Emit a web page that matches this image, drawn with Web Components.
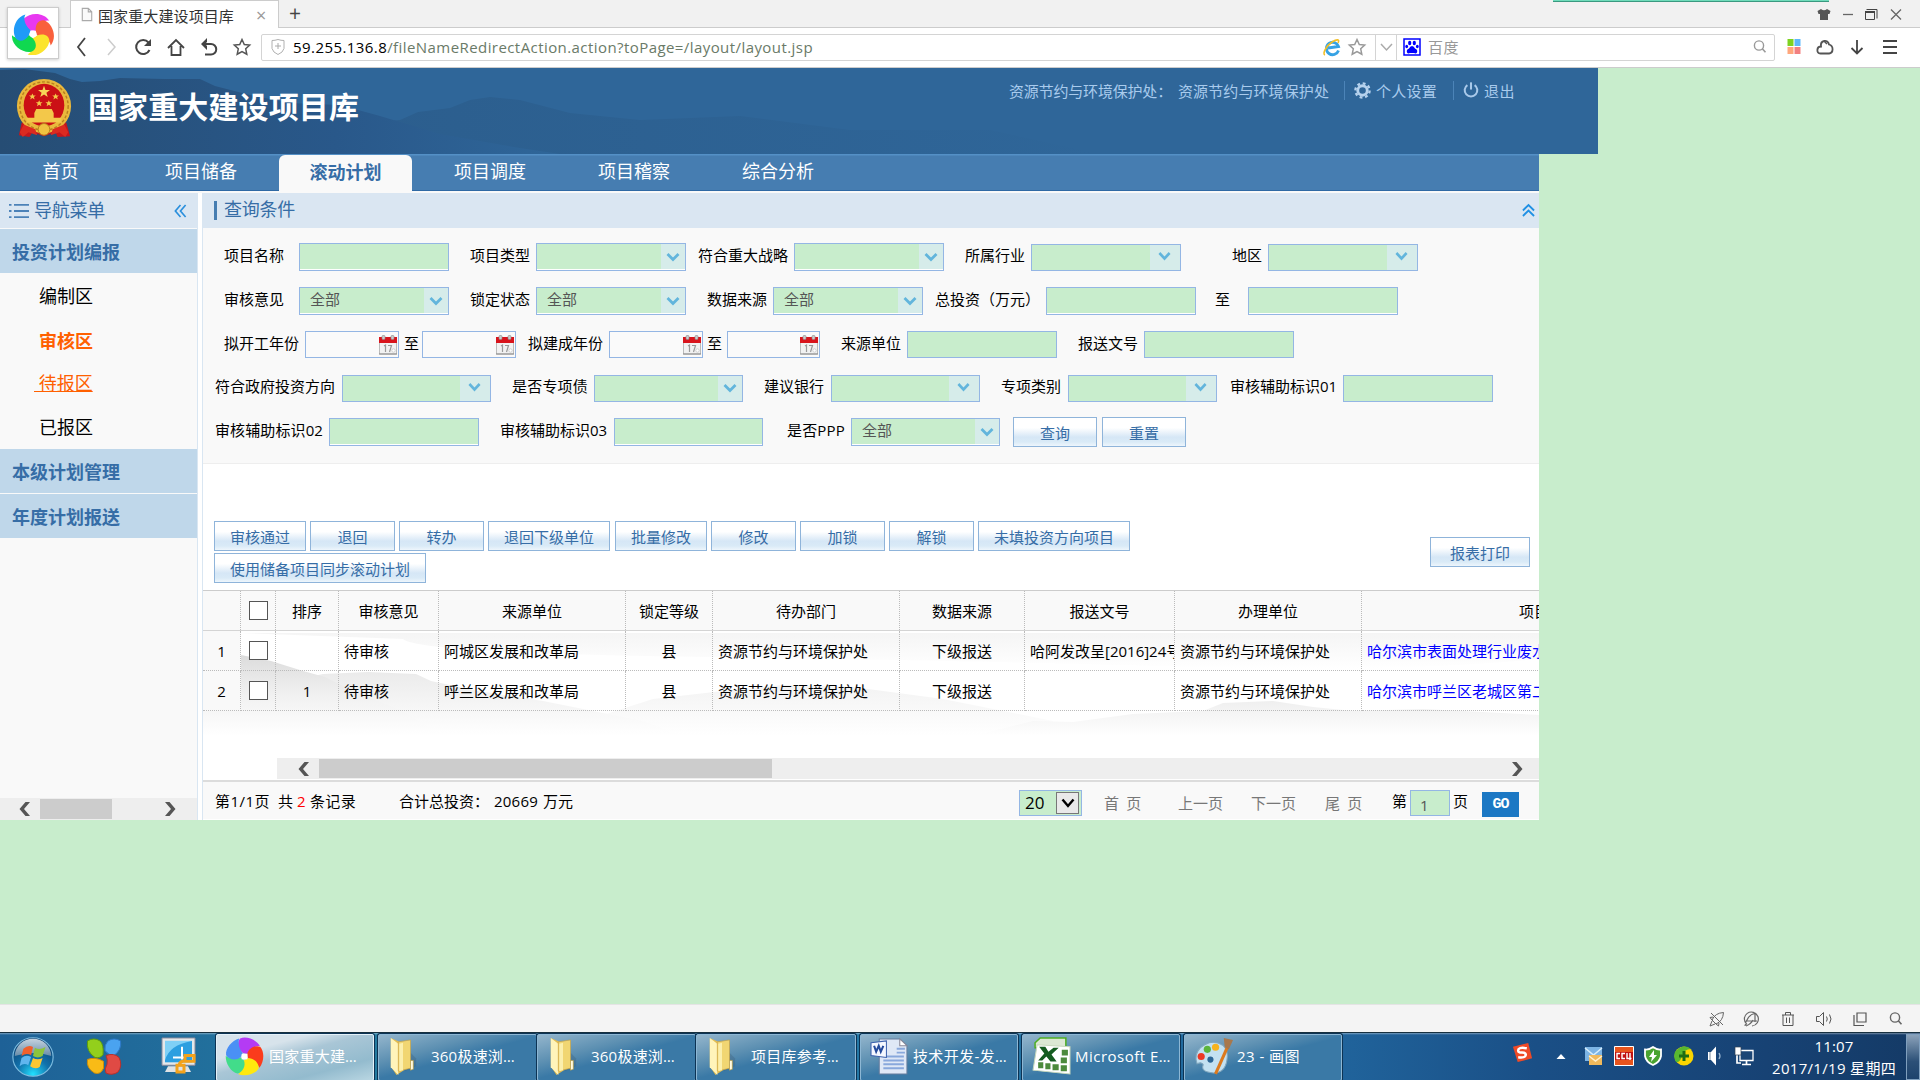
<!DOCTYPE html>
<html lang="zh-CN">
<head>
<meta charset="utf-8">
<title>国家重大建设项目库</title>
<style>
html,body{margin:0;padding:0}
body{width:1920px;height:1080px;overflow:hidden;background:#c8edcc;font:15px/20px "Open Sans","Noto Sans CJK SC",sans-serif;color:#000}
</style>
</head>
<body>
<app-screen></app-screen>
<script>
const ICONS={
pin:['-62 -62 124 124',[['#e838f0',0],['#f9603c',72],['#fbe42c',144],['#10d850',216],['#1f9af8',288]].map(a=>`<path fill="${a[0]}" transform="rotate(${a[1]-6})" d="M-5 -11C-26 -18 -33 -36 -22 -48C-2 -65 38 -62 52 -34C36 -39 19 -26 9 -9Z"/>`).join('')+'<circle r="10" fill="#fff"/>'],
pin6:['-62 -62 124 124',[['#b43bf4',0],['#fb3c1c',72],['#ffe80e',144],['#42dc8a',216],['#4a90f5',288]].map(a=>`<path fill="${a[0]}" transform="rotate(${a[1]})" d="M-5 -11C-22 -20 -25 -45 -14 -57C5 -66 36 -54 49 -34C30 -32 17 -22 9 -9Z"/>`).join('')+'<rect x="-9" y="-8" width="18" height="17" fill="#fff"/>'],
page:['0 0 14 17','<path d="M1.5 1.5h7l4 4v10h-11zM8.500 1.500v4h4" fill="#fafafa" stroke="#aaa" stroke-width="1.300"/>'],
back:['0 0 20 20','<path d="M13 1 6 10l7 9" fill="none" stroke="#444" stroke-width="1.800"/>'],
fwd:['0 0 20 20','<path d="M7 2l7 8-7 8" fill="none" stroke="#ccc" stroke-width="1.500"/>'],
reload:['0 0 20 20','<path d="M16.500 13A7 7 0 1 1 15.500 5.500" fill="none" stroke="#444" stroke-width="2"/><path d="M18 2v7h-7z" fill="#444"/>'],
home:['0 0 20 20','<path d="M2 11 10 3l8 8M5.500 9v9h9V9" fill="none" stroke="#444" stroke-width="1.800"/>'],
undo:['0 0 20 20','<path d="M3 7h9a5.200 5.200 0 0 1 0 10.500H6" fill="none" stroke="#444" stroke-width="2"/><path d="M8 1 2 7l6 6V9L6 7l2-2z" fill="#444"/>'],
star:['0 0 20 20','<path d="M10 2.500l2.300 5 5.400.600-4 3.700 1.100 5.400L10 14.500l-4.800 2.700 1.100-5.400-4-3.700 5.400-.600z" fill="none" stroke="currentColor" stroke-width="1.500"/>'],
shield:['0 0 20 20','<path d="M4 3.500q3 0 6-1 3 1 6 1v8q-1 4-6 6-5-2-6-6z" fill="none" stroke="#b0b0b0"/><path d="M10 6v6M7 9h6" stroke="#aaa"/>'],
ie:['0 0 20 20','<path d="M16.500 13.500A6.200 6.200 0 1 1 16.500 9.500L6 11" fill="none" stroke="#36a2e4" stroke-width="2.800"/><path d="M3 18C0 17 4 9 10 5 15 2 18 2 16 6" fill="none" stroke="#f3bf26" stroke-width="1.600"/>'],
down1:['0 0 20 20','<path d="M5 7l5.500 6L16 7" fill="none" stroke="#aaa" stroke-width="1.500"/>'],
baidu:['0 0 20 20','<path d="M2 2h16v16H2z" fill="#fff" stroke="#00f" stroke-width="1.500"/><g fill="#00f"><ellipse cx="7.700" cy="6" rx="1.600" ry="2.200"/><ellipse cx="12.300" cy="6" rx="1.600" ry="2.200"/><ellipse cx="4.700" cy="9.500" rx="1.400" ry="1.800"/><ellipse cx="15.300" cy="9.500" rx="1.400" ry="1.800"/><path d="M10 9q2 0 3 2.500 3 1 2 4-1 1.500-3 .500H8q-2 1-3-.500-1-3 2-4Q8 9 10 9z"/></g>'],
search:['0 0 20 20','<circle cx="9" cy="8.500" r="4.600" fill="none" stroke="currentColor" stroke-width="1.400"/><path d="M12.300 11.800l3.200 3.500" stroke="currentColor" stroke-width="1.600"/>'],
grid:['0 0 20 20','<path fill="#7ed321" d="M3.500 2h6v7h-6z"/><path fill="#5eb8fb" d="M10.500 2h6v7h-6z"/><path fill="#ffa77c" d="M3.500 10h6v7h-6z"/><path fill="#f28080" d="M10.500 10h6v7h-6z"/>'],
cloud:['0 0 20 20','<path d="M5.500 16.500C1 16 1.500 9.500 6 9.500 5 3 13 2 14 7.500c5 1.500 4.500 8.500 0 9z" fill="none" stroke="#555" stroke-width="1.800"/><path d="M9 4l3 3" stroke="#555" stroke-width="1.500"/>'],
arrowd:['0 0 20 20','<path d="M10 3v13M4.500 11l5.500 5.500L15.500 11" fill="none" stroke="#444" stroke-width="1.800"/>'],
menu:['0 0 20 20','<path d="M3 4h14M3 10h14M3 16h14" stroke="#444" stroke-width="2.200"/>'],
shirt:['0 0 20 20','<path d="M7 5q3 2.500 6 0l3.500 2-1 3h-1.500V16H6v-6H4.500l-1-3z" fill="#555"/>'],
min:['0 0 20 20','<path d="M5 10.500h10" stroke="#666" stroke-width="1.300"/>'],
restore:['0 0 20 20','<path d="M4.500 8.500h9v7h-9z" fill="none" stroke="#444"/><path d="M4 8h10" stroke="#444" stroke-width="2"/><path d="M5.500 5.500h10.500v9" fill="none" stroke="#444"/>'],
close:['0 0 20 20','<path d="M5 5.500l10 10M15 5.500l-10 10" stroke="#666" stroke-width="1.300"/>'],
gear:['0 0 20 20','<g stroke="#b6d2ee" fill="none"><circle cx="10" cy="10" r="5" stroke-width="3"/><circle cx="10" cy="10" r="7.500" stroke-width="2.400" stroke-dasharray="3 2.890"/></g>'],
power:['0 0 20 20','<path d="M6 4.500a7 7 0 1 0 8 0" fill="none" stroke="#a9c9ea" stroke-width="2.300"/><path d="M10 1.500v8" stroke="#a9c9ea" stroke-width="2.300"/>'],
list:['0 0 20 18','<path d="M0 2h2.500M0 9h2.500M0 16h2.500M5 2h15M5 9h15M5 16h15" stroke="#4c82b8" stroke-width="2"/>'],
dleft:['0 0 14 14','<path d="M7 1 1.500 7 7 13M12.500 1 7 7l5.500 6" fill="none" stroke="#2a8fdc" stroke-width="1.800"/>'],
dup:['0 0 14 14','<path d="M1 7.500 7 2l6 5.500M1 13l6-5.500 6 5.500" fill="none" stroke="#2090e4" stroke-width="2"/>'],
chev:['0 0 14 14','<path d="M1.500 4 7 9.500 12.500 4" fill="none" stroke="#62b5dc" stroke-width="2.800"/>'],
cal:['0 0 18 20','<path d="M.500 7h17v12H.500z" fill="#f2f2f2" stroke="#bbb"/><path d="M0 2h18v6H0z" fill="#d8141c"/><path d="M0 19h18" stroke="#888"/><g fill="#ccc" stroke="#888" stroke-width=".600"><rect x="3" y=".500" width="3" height="4" rx="1"/><rect x="12" y=".500" width="3" height="4" rx="1"/></g><path d="M5 11l1.500-1v7M9 10.500h3.500L10.500 17" fill="none" stroke="#999" stroke-width="1.200"/><circle cx="14.500" cy="15.500" r="1.700" fill="#fff" stroke="#bbb" stroke-width=".600"/>'],
sl:['0 0 14 16','<path d="M7.500 1h4.500L6 8l6 7H7.500L1.500 8z" fill="#555"/>'],
sr:['0 0 14 16','<path d="M6.500 1H2l6 7-6 7h4.500l6-7z" fill="#555"/>'],
rocket:['0 0 20 20','<path d="M5 11Q8 4 16.500 3.500 16 12 9 15zM6 8l-3 .500L5 11M12 14l-.500 3L9 15M5 12l-2 5 5-2M8 8l4 4M4 4l12 12" fill="none" stroke="#666"/>'],
speed:['0 0 20 20','<path d="M5 15.500A7 7 0 1 1 10 17M3 17C4 10 8 5 13 4.500V13M5 12h10M4 17q5-2 7-6" fill="none" stroke="#666" stroke-width="1.200"/>'],
trash:['0 0 20 20','<path d="M4 6h12M5 6v10.500h10V6M7.500 6V3.500h5V6M8.500 8.500v5.500M11.500 8.500v5.500" fill="none" stroke="#555"/>'],
vol:['0 0 20 20','<path d="M2.500 7.500h3l4-4v13l-4-4h-3zM12.500 7.500q1.500 2.500 0 5M15.500 5.500q3 4.500 0 9" fill="none" stroke="#555"/>'],
wins:['0 0 20 20','<path d="M7 4h9v9H7zM4 6v10.500h10" fill="none" stroke="#555" stroke-width="1.200"/>'],
orb:['0 0 48 46','<defs><radialGradient id="o" cx=".5" cy=".95" r=".9"><stop offset="0" stop-color="#22e0ff"/><stop offset=".45" stop-color="#1172ac"/><stop offset="1" stop-color="#0d3d6d"/></radialGradient><linearGradient id="g" x2="0" y2="1"><stop stop-color="#e6eef4"/><stop offset="1" stop-color="#7894ac"/></linearGradient></defs><circle cx="24" cy="23" r="21" fill="url(#o)" stroke="#7dbde0" stroke-width="1.200"/><path d="M5 22a19 19 0 0 1 38 0q-18-7-38 0z" fill="url(#g)" opacity=".85"/><path fill="#f0602c" d="M14 14q5-5 10-2l-2 9q-5-3-10 1z"/><path fill="#8cc43c" d="M26 13q5 3 11-1l-3 10q-5 3-10 0z"/><path fill="#5fb5ee" d="M12 24q5-4 10-1l-3 9q-4-3-9 1z"/><path fill="#fbc734" d="M24 24q5 3 10 0l-3 10q-5 3-10-1z"/>'],
four:['0 0 36 38','<path fill="#93cf1c" stroke="#5c9a0c" d="M1.500 3Q8-1 14 3q4 4 3 14-2 4-8 3Q0 14 1.500 3z"/><path fill="#4aa3f0" stroke="#2c78c8" d="M34.500 3Q28-1 22 3q-4 4-3 10 4 5 9 5Q36 12 34.500 3z"/><path fill="#f9bb16" stroke="#cf8c08" d="M1.500 22q8-3 16 2v7q-3 7-9 5Q0 31 1.500 22z"/><path fill="#e04a44" stroke="#b8302c" d="M20 18q8-3 13 2 4 8-1 15-6 4-12 1-2-4 1-9 1-5-1-9z"/>'],
snip:['0 0 36 38','<path fill="#e5e8ea" stroke="#889" d="M1 1h33v28H1z"/><path fill="#2d9fe0" d="M4 4h27v22H4z"/><path fill="#7fd0f6" d="M4 4h27Q8 8 4 24z"/><path fill="#dfe2e4" d="M7 30h20l3 6H4z"/><path d="M21 10v13M12 21h12" stroke="#fff" stroke-width="2" fill="none"/><g fill="none" stroke="#f3a21b" stroke-width="3"><path d="M24 19h9v6h-9zM16 29h7v7h-7zM18 29q1-5 6-4"/></g>'],
folder:['0 0 32 40','<path fill="#3a5a70" opacity=".3" d="M18 35l12-5v-8l-8-8z"/><path fill="#e3bd52" d="M3 1l14 6v27L9 39 3 30z"/><path fill="#fff4ba" d="M3 1l8 6v32L3 31z"/><path fill="#f1d672" stroke="#c9a343" stroke-width=".700" d="M11 5l13-2v29L11 35z"/><path fill="#fbefad" d="M12 7l4-1v28l-4 1z"/><path fill="#fffbe2" stroke="#b99a3e" stroke-width=".700" d="M24 24h3v9l-3 1z"/>'],
word:['0 0 38 40','<path fill="#dfe8f6" stroke="#667d9c" d="M9 2h20l7 7v29H9z"/><path fill="#fff" stroke="#889" d="M29 2v7h7z"/><g stroke="#89a8dc" stroke-width="2"><path d="M13 20h20M13 24h20M13 28h20M13 32h20M26 12h8M26 16h8"/></g><path fill="#f5f8ff" stroke="#3d62ad" d="M1 6l15-2v17L1 19z"/><path d="M4 9l2 6 2.500-6 2 6L13 9" fill="none" stroke="#244a9c" stroke-width="2"/>'],
excel:['0 0 38 40','<path fill="#dce8d4" stroke="#4fae24" stroke-width="1.500" d="M8 1h25v10H3V6z"/><path fill="#fff" stroke="#c7d8bc" d="M5 8l32 2v28L1 34z"/><g fill="#4c8a3c"><path d="M29 13h6v6h-6zM28 21h6v6h-6zM28 29h6v6h-6zM20 28h6v6h-6zM13 27h5v6h-5zM6 26h5v6H6z"/><path d="M7 10h6l3 5 5-4h5l-7 7 5 7h-6l-4-5-4 4H6l6-7z" fill="#155c20"/></g>'],
paint:['0 0 38 38','<path fill="#c3e1f1" stroke="#82a8bf" d="M2 22C1 9 17 1 28 8q6 5 4 15-2 12-13 12Q6 34 9 27 8 24 3 26z"/><circle cx="7" cy="19" r="3.500" fill="#ec3824"/><circle cx="13" cy="12" r="3.500" fill="#5cb43c"/><circle cx="21" cy="10" r="3.500" fill="#f7b21c"/><circle cx="16" cy="22" r="3" fill="#2d6796"/><path d="M33 9 21 36" stroke="#dc7a1e" stroke-width="3"/><path d="M29 1l9 2-4 9-4-2z" fill="#a8784c"/>'],
sogou:['0 0 22 22','<path fill="#ef4a26" d="M1 4l16-4 4 16-15 4z"/><path d="M15.500 5.500Q6 4 6.500 8q0 2 4 2t4 2.500Q14 16 6.500 15" fill="none" stroke="#fff" stroke-width="2.600"/>'],
up:['0 0 20 20','<path fill="#fff" d="M5.500 13 10 8l4.500 5z"/>'],
mail:['0 0 20 20','<path fill="#7db4e4" d="M1 1h17v14H1z"/><path d="M1 2l8.500 7L18 2" stroke="#d9eefb" fill="none" stroke-width="1.500"/><path fill="#f0b95c" d="M5 9h13v10H5z"/><path d="M5 10l6.500 5 6.500-5" stroke="#fff0cd" fill="none" stroke-width="1.500"/>'],
cc:['0 0 20 20','<path fill="#e8541c" stroke="#fff" d="M.500.500h19v19H.500z"/><path fill="#c01010" d="M1 6h18v8H1z"/><path d="M6 7.500H3v5h3M11 7.500H8v5h3M13 7v5.500h4.500M16 7v7" fill="none" stroke="#fff" stroke-width="1.400"/>'],
guard:['0 0 20 20','<path fill="#49a330" stroke="#fff" stroke-width="1.800" d="M10 1q4 3 8 2.500V10q-1 6-8 9-7-3-8-9V3.500Q6 4 10 1z"/><path fill="#fff" d="M11 4l-5 7h3l-1 5 6-7h-3z"/>'],
plus:['0 0 20 20','<circle cx="10" cy="10" r="9.500" fill="#fbd500"/><path d="M1 6Q9-3 17 3q-7 0-9 7-2 7-6 6-3-5-1-10z" fill="#58b830"/><path d="M10 5v10M5 10h10" stroke="#1d6c14" stroke-width="3"/>'],
spk:['0 0 20 20','<path fill="#fff" d="M3 6h3l5-5.500v19L6 14H3z"/><path d="M5 6v8" stroke="#789"/><path d="M14 7q2 3 0 6" fill="none" stroke="#9ab5d0" stroke-width="1.300"/>'],
net:['0 0 20 20','<path fill="#1c4676" stroke="#fff" stroke-width="1.300" d="M6 4.500h13v10H6z"/><path d="M8 18.500h9M12.500 15v3M3 9v8h4" stroke="#fff" stroke-width="1.700" fill="none"/><path fill="#fff" stroke="#345" stroke-width=".700" d="M1 1h6v8H1z"/>'],
emblem:['0 0 60 64','<path fill="#c4161c" d="M7 46h46l4 14-13 1-2-5-12 4-12-4-3 5-11-2z"/><ellipse cx="30" cy="29" rx="28" ry="28" fill="#e9b83c"/><ellipse cx="30" cy="29" rx="25" ry="25" fill="none" stroke="#b9801e" stroke-width="1.500" stroke-dasharray="3 2"/><ellipse cx="30" cy="28" rx="21" ry="22" fill="#cb1015"/><path fill="#f7d558" d="M30 8l1.600 4.400h4.600l-3.700 2.800 1.400 4.500L30 17l-3.900 2.700 1.400-4.500-3.700-2.800h4.600z"/><g fill="#f3c84a"><path d="M18 16l1 2h2.500l-2 1.600.800 2.600-2.300-1.500-2.300 1.500.8-2.600-2-1.600H17z"/><path d="M42 16l1 2h2.500l-2 1.600.800 2.600-2.300-1.500-2.300 1.500.8-2.600-2-1.600H41z"/><path d="M25 23l1 2h2.500l-2 1.600.800 2.600-2.300-1.500-2.300 1.500.8-2.600-2-1.600H24zM35 23l1 2h2.500l-2 1.600.800 2.600-2.300-1.500-2.300 1.500.8-2.600-2-1.600H34z"/><path d="M22 32h16l2 4v5h8v5H12v-5h8v-5z"/></g><circle cx="30" cy="53" r="6" fill="#f0c240" stroke="#b9801e"/><path fill="#dc2a20" d="M9 48l12 5 2 6-9-3-6 5-3-5zM51 48l-12 5-2 6 9-3 6 5 3-5z"/>']
};

class Base extends HTMLElement{
  constructor(){super();this.attachShadow({mode:'open'})}
  a(n,d=''){return this.getAttribute(n)??d}
  paint(css,html){
    this.shadowRoot.innerHTML=`<style>*{box-sizing:border-box}:host{display:block;box-sizing:border-box;flex:none}${css}</style>${html}`;
    if(this.hasAttribute('g'))this.style.marginLeft=this.a('g')+'px';
    if(this.hasAttribute('w'))this.style.width=this.a('w')+'px';
  }
}
const def=(n,f)=>customElements.define(n,class extends Base{connectedCallback(){f.call(this)}});

def('ui-icon',function(){
  const [vb,svg]=ICONS[this.a('n')],w=this.a('w',20),h=this.a('h',w);
  this.paint(`:host{width:${w}px;height:${h}px}svg{display:block;width:100%;height:100%}`,`<svg viewBox="${vb}" preserveAspectRatio="none">${svg}</svg>`);
});

/* Single line of text whose tracking is tuned to fill its width. */
def('ui-text',function(){
  this.paint(`:host{white-space:pre}span{display:inline-block}`,'<span><slot></slot></span>');
  if(this.hasAttribute('w')){
    const s=this.shadowRoot.querySelector('span'),n=[...this.textContent].length,w=s.getBoundingClientRect().width;
    if(w)s.style.letterSpacing=((+this.a('w')-w)/n).toFixed(3)+'px';
  }
});

def('ui-button',function(){
  this.paint(`:host{height:30px;border:1px solid #8fb4da;background:linear-gradient(#fff 35%,#d6e7f6 68%,#d9eaf7 85%,#eef6fc);color:#366da6;font-size:15px;line-height:31px;text-align:center;white-space:nowrap}`,'<slot></slot>');
});

def('ui-field',function(){
  const t=this.a('t','text'),h=this.a('h',28),lab=this.a('label'),wide=t=='wide',sel=wide||t=='sel';
  this.paint(`:host{display:flex;align-items:flex-start}
  .l{margin-top:${this.a('lt',2)}px;margin-right:${this.a('lg',6)}px}
  .b{width:${this.a('bw',150)}px;height:${h}px;border:1px solid #94b6e4;background:${t=='date'?'#fafafa':'#c8edcc'};${h==28&&t!='date'?'box-shadow:inset 0 -1px #fff;':''}display:flex;justify-content:space-between}
  .v{padding-left:10px;line-height:23px;color:#555}
  .c{width:${wide?30:24}px;height:25px;background:#d6ecea;padding:${wide?'4px 9px 0 8px':h==27?'5px 2px 0 5px':'6px 2px 0 5px'}}
  .d{margin:3px 1px 0 auto}`,
  `<ui-text class="l" w="${this.a('lw',60)}">${lab}</ui-text><div class="b"><span class="v">${this.a('v')}</span>${sel?`<div class="c"><ui-icon n="chev" w="${wide?13:14}" h="14"></ui-icon></div>`:''}${t=='date'?'<ui-icon class="d" n="cal" w="18" h="20"></ui-icon>':''}</div>`);
});

def('ui-scroll',function(){
  this.paint(`:host{display:flex;height:${this.a('h',20)}px;background:#eee;align-items:center}
  .t{height:100%;width:${this.a('tw')}px;margin-left:${this.a('tg')}px;background:#ccc;border:solid #eee;border-width:1px 0}
  .r{margin-left:auto;margin-right:${this.a('rp')}px}`,
  `<ui-icon n="sl" w="14" h="16" g="${this.a('lp')}"></ui-icon><div class="t"></div><ui-icon class="r" n="sr" w="14" h="16"></ui-icon>`);
});

def('browser-chrome',function(){
  this.paint(`:host{height:68px;background:#fff;border-bottom:1px solid #ccc;position:relative}
  .tabs{height:28px;background:#f1f1f1;border-bottom:1px solid #ccc;display:flex;align-items:center;position:relative}
  .tab{margin-left:70px;width:209px;height:28px;background:#fff;border:1px solid #ccc;border-bottom:0;display:flex;align-items:center;margin-bottom:-1px}
  .tab ui-text{color:#333;margin-top:2px}.x{color:#999;font-size:18px;margin-left:22px;margin-top:1px}
  .plus{font-size:21px;color:#444;margin-left:10px;width:14px;margin-top:-1px}
  .notch{position:absolute;left:1553px;top:0;width:276px;height:2px;background:#6fdcbb;border-bottom:1px solid #3a9980}
  .win{margin-left:auto;display:flex;padding-right:14px}
  .bar{display:flex;height:39px;align-items:center}
  .bar>ui-icon,.addr>ui-icon{margin-top:-1px}
  .addr{display:flex;align-items:center;width:1514px;height:27px;border:1px solid #d4d4d4;border-radius:2px}
  .addr>ui-text{margin-top:-2px}
  .s{width:1px;height:25px;background:#d4d4d4}
  .logo{position:absolute;left:7px;top:7px;width:52px;height:52px;background:#fff;border:1px solid #ccc;box-shadow:0 1px 3px #0003;padding:5px 4px}
  .gray{color:#999}b{font-weight:400;color:#000}.url{color:#6a7a68}`,
  `<div class="tabs"><div class="tab"><ui-icon n="page" w="12" h="15" g="10"></ui-icon><ui-text g="5" w="136">国家重大建设项目库</ui-text><span class="x">×</span></div><span class="plus">+</span>
  <div class="win"><ui-icon n="shirt"></ui-icon><ui-icon n="min" g="4"></ui-icon><ui-icon n="restore" g="3"></ui-icon><ui-icon n="close" g="5"></ui-icon></div><div class="notch"></div></div>
  <div class="bar"><ui-icon n="back" g="72"></ui-icon><ui-icon n="fwd" g="9"></ui-icon><ui-icon n="reload" g="12"></ui-icon><ui-icon n="home" g="13"></ui-icon><ui-icon n="undo" g="13"></ui-icon><ui-icon n="star" g="13" style="color:#555"></ui-icon>
  <div class="addr" style="margin-left:9px"><ui-icon n="shield" g="6"></ui-icon><ui-text class="url" g="5" w="520"><b>59.255.136.8</b>/fileNameRedirectAction.action?toPage=/layout/layout.jsp</ui-text>
  <ui-icon n="ie" g="509"></ui-icon><ui-icon class="gray" n="star" g="5"></ui-icon><div class="s" style="margin-left:8px"></div><ui-icon n="down1"></ui-icon><div class="s"></div><ui-icon n="baidu" g="5"></ui-icon><ui-text class="gray" g="6" w="31">百度</ui-text><ui-icon class="gray" n="search" style="margin-left:auto;margin-right:4px"></ui-icon></div>
  <ui-icon n="grid" g="9"></ui-icon><ui-icon n="cloud" g="11"></ui-icon><ui-icon n="arrowd" g="12"></ui-icon><ui-icon n="menu" g="13"></ui-icon></div>
  <div class="logo"><ui-icon n="pin" w="42" h="42"></ui-icon></div>`);
});

def('site-header',function(){
  this.paint(`:host{width:1598px;height:86px;background:#2f6699;position:relative;color:#a9cbed}
  svg{position:absolute;inset:0}
  .r{position:relative;display:flex;height:86px;align-items:flex-start}
  .t{font-size:30px;line-height:40px;font-weight:700;color:#fff;margin-top:19px}
  .m{margin-top:13px}.i{margin-top:13px}.s{width:1px;height:19px;background:#4c84b8;margin-top:13px}`,
  `<svg width="1598" height="86"><defs><linearGradient id="a" x2="1"><stop stop-color="#264d74"/><stop offset=".6" stop-color="#29588a"/><stop offset="1" stop-color="#2f6699"/></linearGradient><linearGradient id="b" x2="1"><stop stop-color="#2a5a88"/><stop offset="1" stop-color="#2f6699"/></linearGradient></defs>
  <path fill="url(#b)" d="M0 40L300 60 400 52 418 44 450 40 470 32 490 29 520 32 570 45 640 52 740 48 850 62 990 62 1100 86H0z"/><path fill="url(#a)" d="M0 2L24 1 55 5 70 11 82 14 100 13 120 10 165 11 200 11 215 18 250 27 290 35 340 37 380 48 440 66 520 80 560 86H0z"/></svg>
  <div class="r"><ui-icon n="emblem" w="58" h="62" g="15" style="margin-top:10px"></ui-icon><ui-text class="t" g="15" w="271">国家重大建设项目库</ui-text>
  <ui-text class="m" g="650" w="163">资源节约与环境保护处：</ui-text><ui-text class="m" g="6" w="151">资源节约与环境保护处</ui-text><div class="s" style="margin-left:15px"></div><ui-icon class="i" n="gear" w="19" g="8"></ui-icon><ui-text class="m" g="4" w="61">个人设置</ui-text><div class="s" style="margin-left:16px"></div><ui-icon class="i" n="power" w="18" g="8"></ui-icon><ui-text class="m" g="4" w="31">退出</ui-text></div>`);
});

def('site-nav',function(){
  const items=[[121,0,'首页'],[144,8,'项目储备'],[133,6,'滚动计划'],[144,6,'项目调度'],[144,0,'项目稽察'],[144,0,'综合分析']];
  this.paint(`:host{width:1539px;height:39px;background:linear-gradient(#5490c6 1px,#467db1 2px,#467db1 36px,#2f69a4 36px,#2f69a4 37px,#f9f9f9 37px);display:flex;color:#fff;font-size:18px;line-height:35px}
  .i{text-align:center}
  .on{margin-top:1px;background:#f9f9f9;color:#366da6;font-weight:700;border-radius:6px 6px 0 0}`,
  items.map((t,i)=>`<div class="i${i==2?' on':''}" style="width:${t[0]}px;margin-left:${t[1]}px">${t[2]}</div>`).join(''));
});

def('side-nav',function(){
  this.paint(`:host{width:198px;height:627px;background:#f9f9f9;border-right:1px solid #d9e6f2;display:flex;flex-direction:column;font-size:18px;line-height:24px}
  .h{height:35px;background:#dae6f2;display:flex;align-items:center;color:#366da6}
  .g{height:44px;background:#bfd7ea;color:#366da6;font-weight:700;padding:11px 0 0 12px;margin-top:1px}
  .i{height:44px;padding:5px 0 0 39px}.on{color:#ff6000;font-weight:700}.u{color:#ff6000;padding-left:34px;text-decoration:underline;white-space:pre}
  ui-scroll{margin-top:auto}`,
  `<div class="h"><ui-icon n="list" w="20" h="16" g="9"></ui-icon><ui-text g="5" w="71" style="margin-top:-2px">导航菜单</ui-text><ui-icon n="dleft" w="13" h="14" g="69"></ui-icon></div>
  <div class="g">投资计划编报</div><div class="i" style="height:45px;padding-top:11px">编制区</div><div class="i on" style="padding-top:11px">审核区</div><div class="i u" style="padding-top:9px"> 待报区</div><div class="i" style="height:42px;padding-top:9px">已报区</div>
  <div class="g">本级计划管理</div><div class="g">年度计划报送</div><ui-scroll h="22" lp="18" tg="8" tw="72" rp="20"></ui-scroll>`);
});

def('query-panel',function(){
  this.paint(`:host{height:271px;background:#f9f9f9;border-bottom:1px solid #eee}
  .h{height:35px;background:#dae6f2;display:flex;align-items:center;color:#366da6;font-size:18px;line-height:24px}
  .k{width:3px;height:19px;background:#467db1;margin-left:11px}
  .r{display:flex;align-items:flex-start}.d{margin-top:1px}`,
  `<div class="h"><div class="k"></div><ui-text g="7" w="71" style="margin-top:-4px">查询条件</ui-text><ui-icon n="dup" w="13" h="14" style="margin:-2px 4px 0 auto"></ui-icon></div>
  <div class="r" style="margin-top:15px"><ui-field g="21" label="项目名称" lg="15"></ui-field><ui-field g="21" label="项目类型" t="sel"></ui-field><ui-field g="12" label="符合重大战略" lw="90" t="sel"></ui-field><ui-field class="d" h="27" lt="1" g="21" label="所属行业" t="wide"></ui-field><ui-field class="d" h="27" lt="1" g="51" label="地区" lw="30" t="wide"></ui-field></div>
  <div class="r" style="margin-top:16px"><ui-field g="21" label="审核意见" lg="15" t="sel" v="全部"></ui-field><ui-field g="21" label="锁定状态" t="sel" v="全部"></ui-field><ui-field g="21" label="数据来源" t="sel" v="全部"></ui-field><ui-field g="12" label="总投资（万元）" lw="105"></ui-field><ui-field g="19" label="至" lw="15" lg="18"></ui-field></div>
  <div class="r" style="margin-top:16px"><ui-field h="27" g="21" label="拟开工年份" lw="75" bw="94" t="date"></ui-field><ui-field h="27" g="5" label="至" lw="14" lg="4" bw="94" t="date"></ui-field><ui-field h="27" g="12" label="拟建成年份" lw="75" bw="94" t="date"></ui-field><ui-field h="27" g="4" label="至" lw="15" lg="5" bw="93" t="date"></ui-field><ui-field h="27" g="21" label="来源单位"></ui-field><ui-field h="27" g="21" label="报送文号"></ui-field></div>
  <div class="r" style="margin-top:17px"><ui-field lt="1" h="27" g="12" label="符合政府投资方向" lw="120" lg="7" bw="149" t="wide"></ui-field><ui-field lt="1" h="27" g="21" label="是否专项债" lw="76" bw="149" t="sel"></ui-field><ui-field lt="1" h="27" g="21" label="建议银行" lg="7" bw="149" t="wide"></ui-field><ui-field lt="1" h="27" g="21" label="专项类别" lg="7" bw="149" t="wide"></ui-field><ui-field lt="1" h="27" g="13" label="审核辅助标识01" lw="107"></ui-field></div>
  <div class="r" style="margin-top:15px"><ui-field class="d" g="12" label="审核辅助标识02" lw="108"></ui-field><ui-field class="d" g="21" label="审核辅助标识03" lw="107" lg="7" bw="149"></ui-field><ui-field class="d" g="24" label="是否PPP" lw="58" bw="149" t="sel" v="全部"></ui-field><ui-button g="13" w="84">查询</ui-button><ui-button g="5" w="84">重置</ui-button></div>`);
});

def('action-bar',function(){
  const b=[[92,11,'审核通过'],[85,4,'退回'],[85,4,'转办'],[122,4,'退回下级单位'],[92,5,'批量修改'],[85,4,'修改'],[85,4,'加锁'],[85,4,'解锁'],[152,4,'未填投资方向项目']];
  this.paint(`:host{height:126px;padding-top:57px;display:flex;justify-content:space-between;background:#fff}.r{display:flex}.l{margin-top:2px}`,
  `<div><div class="r">${b.map(x=>`<ui-button w="${x[0]}" g="${x[1]}">${x[2]}</ui-button>`).join('')}</div><div class="r l"><ui-button w="212" g="11">使用储备项目同步滚动计划</ui-button></div></div><ui-button w="100" style="margin:16px 9px 0 0">报表打印</ui-button>`);
});

def('data-table',function(){
  const cols=[38,35,63,100,187,87,187,125,150,187,400];
  const rows=[['','☐','排序','审核意见','来源单位','锁定等级','待办部门','数据来源','报送文号','办理单位','项目名称'],
  ['1','☐','','待审核','阿城区发展和改革局','县','资源节约与环境保护处','下级报送','哈阿发改呈[2016]24号','资源节约与环境保护处','哈尔滨市表面处理行业废水'],
  ['2','☐','1','待审核','呼兰区发展和改革局','县','资源节约与环境保护处','下级报送','','资源节约与环境保护处','哈尔滨市呼兰区老城区第二']];
  const left=[3,4,6,8,9,10];
  this.paint(`:host{height:190px;background:#fff;position:relative;overflow:hidden;border-top:1px solid #ccc;display:flex;flex-direction:column}
  svg{position:absolute;left:0;top:40px}
  .r{position:relative;display:flex;height:40px;width:1559px;line-height:40px}
  .r.h{background:#f9f9f9;border-bottom:1px solid #d4d4d4}
  .c{flex:none;border-right:1px dotted #bbb;overflow:hidden;white-space:nowrap;text-align:center;border-bottom:1px dotted #bbb}
  .h .c{border-bottom:0}.r:not(.h) .c:first-child{background:#f9f9f9}
  .lf{text-align:left;padding-left:5px}.ln{color:#00f}
  .k{width:19px;height:19px;border:1px solid #555;background:#fff;margin:10px auto 0 8px}
  ui-scroll{margin:47px 0 0 74px;position:relative}`,
  `<svg width="1336" height="105"><defs><linearGradient id="m" x2="0" y2="1"><stop stop-color="#dcdcdc"/><stop offset=".5" stop-color="#f1f1f1"/><stop offset="1" stop-color="#fff"/></linearGradient><linearGradient id="q" x2="0" y2="1"><stop stop-color="#ebebeb"/><stop offset=".6" stop-color="#f7f7f7"/><stop offset="1" stop-color="#fff"/></linearGradient><linearGradient id="n" x2="0" y2="1"><stop stop-color="#f5f5f5"/><stop offset="1" stop-color="#fff"/></linearGradient></defs><path fill="url(#n)" d="M38 2h1298v26q-150 14-350 8T500 26 200 8z"/><path fill="url(#q)" opacity=".6" d="M400 84L450 68 520 60 580 54 650 56 740 68 850 90V105H400z"/><path fill="url(#q)" d="M38 60L120 43 165 41 213 43 228 50 275 60 340 70 380 78 440 90 480 105H38z"/><path fill="url(#m)" d="M38 24L68 30 100 40 122 46 150 60 200 80 240 105H0V80H38z"/><path fill="url(#q)" opacity=".8" d="M770 105L830 90 870 91 930 83 1000 80 1020 72 1070 70 1110 76 1150 80 1220 78 1336 84V105H770z"/></svg>`+
  rows.map((r,i)=>`<div class="r${i?'':' h'}">${r.map((t,j)=>`<div class="c${i&&left.includes(j)?' lf':''}${i&&j==10?' ln':''}" style="width:${cols[j]}px${!i&&j==10?';text-align:left;padding-left:157px':''}">${t=='☐'?'<div class="k"></div>':t}</div>`).join('')}</div>`).join('')+
  `<ui-scroll h="21" lp="20" tg="8" tw="453" rp="15"></ui-scroll>`);
});

def('page-bar',function(){
  this.paint(`:host{height:40px;background:#f9f9f9;border-top:2px solid #dcdcdc;display:flex;align-items:flex-start;border-bottom:1px solid #fff}
  .t{margin-top:9px}.p{margin-top:11px;color:#777}.red{color:red}
  .s{width:63px;height:26px;margin:8px 0 0 447px;border:1px solid #94b6e4;background:#c8edcc;display:flex;font-size:17px;line-height:22px;padding:1px 2px 1px 5px;justify-content:space-between}
  .v{width:23px;height:22px;background:#e9e9e9;border:1px solid #777;padding:4px 4px}
  .v svg{display:block}
  .i{width:40px;height:26px;margin:8px 0 0 3px;border:1px solid #94b6e4;background:#c8edcc;color:#555;line-height:29px;padding-left:9px}
  .go{width:37px;height:25px;margin:10px 0 0 14px;background:#1c78c4;color:#fff;font:700 15px/25px "Liberation Mono",monospace;letter-spacing:-1px;text-align:center}`,
  `<ui-text class="t" g="12" w="55">第1/1页</ui-text><ui-text class="t" g="8" w="15">共</ui-text><ui-text class="t red" g="4" w="9">2</ui-text><ui-text class="t" g="4" w="46">条记录</ui-text><ui-text class="t" g="43" w="90">合计总投资：</ui-text><ui-text class="t" g="5" w="44">20669</ui-text><ui-text class="t" g="5" w="30">万元</ui-text>
  <div class="s" style="margin-left:446px"><span>20</span><div class="v"><svg width="14" height="12"><path d="M1.500 2.500L7 9l5.500-6.500" fill="none" stroke="#000" stroke-width="2.400"/></svg></div></div>
  <ui-text class="p" g="22" w="39">首 页</ui-text><ui-text class="p" g="35" w="45">上一页</ui-text><ui-text class="p" g="28" w="45">下一页</ui-text><ui-text class="p" g="29" w="39">尾 页</ui-text><ui-text class="t" g="28" w="15">第</ui-text><div class="i">1</div><ui-text class="t" g="3" w="15">页</ui-text><div class="go">GO</div>`);
});

def('status-strip',function(){
  this.paint(`:host{height:28px;background:#f4f4f4;border-top:1px solid #e4e4e4;display:flex;justify-content:flex-end;align-items:center;padding-right:14px}`,
  ['rocket','speed','trash','vol','wins','search'].map((n,i)=>`<ui-icon n="${n}" g="${i?i==1?15:16:0}" style="color:#666"></ui-icon>`).join(''));
});

def('task-button',function(){
  const on=this.hasAttribute('on'),f=this.a('n')=='folder';
  this.paint(`:host{display:flex;height:47px;border:1px solid ${on?'#e4f1f8':'#8db7d4'};border-radius:2px;box-shadow:0 0 0 1px #0c3354;color:#fff;background:${on?'linear-gradient(165deg,#d7e3eb 0 28%,#a9c6d6 45%,#93bbce 75%,#b9d6e2)':'linear-gradient(165deg,#93b5cc 0%,#5d90b2 32%,#367ba500 50%,#3a79a600 100%),#3a79a6'};overflow:hidden}
  ui-icon{margin-top:2px}ui-text{margin-top:11px}`,
  `<ui-icon n="${this.a('n')}" w="${f?30:39}" h="39" g="${this.a('ig',9)}"></ui-icon><ui-text g="${this.a('tg',5)}" w="${this.a('tw',88)}">${this.a('label')}</ui-text>`);
});

def('task-bar',function(){
  this.paint(`:host{height:48px;display:flex;padding-top:1px;border-top:1px solid #17303f;background:linear-gradient(#ffffff66,#fff0 2px),linear-gradient(90deg,#1e6197,#247ba0 20%,#2478a6 45%,#20639b 70%,#1a4f86 80%,#174274 92%,#143a66)}
  .m{margin-top:2px}.t{margin-top:12px}
  .c{width:130px;margin-left:15px;color:#fff;text-align:center;line-height:22px;padding-top:1px}
  .c ui-text{margin:auto}
  .d{width:14px;height:46px;border:1px solid #7f9fbe;background:linear-gradient(#8ba2ba,#2c5077 60%,#1d426c);margin-left:7px}`,
  `<ui-icon class="m" n="orb" w="46" h="42" g="10"></ui-icon><ui-icon n="four" w="36" h="37" g="30" style="margin-top:4px"></ui-icon><ui-icon n="snip" w="36" h="37" g="39" style="margin-top:3px"></ui-icon>
  <task-button on n="pin6" w="158" g="19" ig="8" tg="5" label="国家重大建…"></task-button>
  <task-button n="folder" w="159" g="4" ig="9" tg="13" tw="84" label="360极速浏…"></task-button><task-button n="folder" w="159" ig="10" tg="13" tw="84" label="360极速浏…"></task-button><task-button n="folder" w="160" ig="10" tg="14" tw="88" label="项目库参考…"></task-button>
  <task-button n="word" w="158" g="4" tg="4" tw="94" label="技术开发-发…"></task-button><task-button n="excel" w="158" g="4" tg="4" tw="96" label="Microsoft E…"></task-button><task-button n="paint" w="158" g="4" tg="4" tw="63" label="23 - 画图"></task-button>
  <ui-icon n="sogou" w="21" g="170" style="margin-top:9px"></ui-icon><ui-icon class="t" n="up" g="18"></ui-icon><ui-icon class="t" n="mail" g="13"></ui-icon><ui-icon class="t" n="cc" g="10"></ui-icon><ui-icon class="t" n="guard" g="9"></ui-icon><ui-icon class="t" n="plus" g="11"></ui-icon><ui-icon class="t" n="spk" g="11"></ui-icon><ui-icon class="t" n="net" g="9"></ui-icon>
  <div class="c"><ui-text w="39">11:07</ui-text><ui-text w="124">2017/1/19 星期四</ui-text></div><div class="d"></div>`);
});

def('app-screen',function(){
  this.paint(`:host{width:1920px;height:1080px;display:flex;flex-direction:column}
  .b{display:flex;width:1539px;height:627px;background:#fff}
  .p{margin-left:4px;width:1337px;border-left:1px solid #d9e6f2;display:flex;flex-direction:column}
  status-strip{margin-top:auto}`,
  `<browser-chrome></browser-chrome><site-header></site-header><site-nav></site-nav>
  <div class="b"><side-nav></side-nav><div class="p"><query-panel></query-panel><action-bar></action-bar><data-table></data-table><page-bar></page-bar></div></div>
  <status-strip></status-strip><task-bar></task-bar>`);
});
</script>
</body>
</html>
